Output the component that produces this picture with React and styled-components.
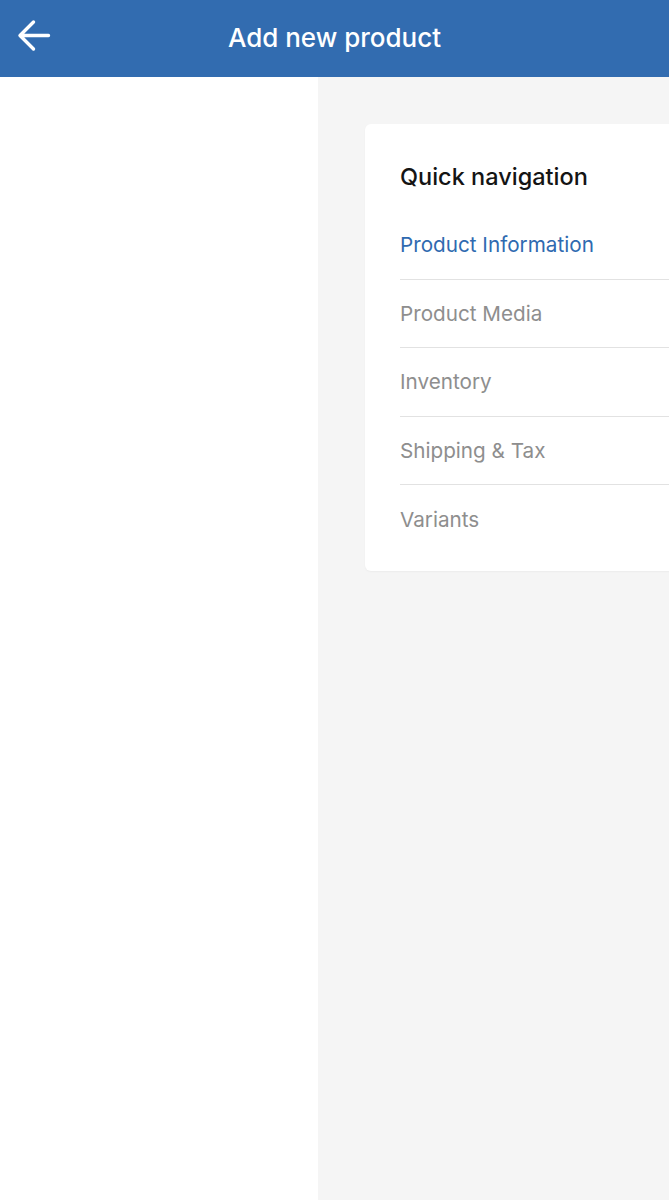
import styled, { createGlobalStyle } from "styled-components";

const GlobalStyle = createGlobalStyle`
  html, body {
    margin: 0;
    padding: 0;
    background: #ffffff;
    overflow-x: hidden;
  }
  * { box-sizing: border-box; }
`;

const Page = styled.div`
  width: 669px;
  height: 1200px;
  display: flex;
  flex-direction: column;
  overflow: hidden;
  font-family: Inter, "Noto Sans", sans-serif;
`;

const TopBar = styled.header`
  height: 77px;
  flex: none;
  background: #326cb0;
  display: flex;
  align-items: center;
  position: relative;
`;

const BackButton = styled.button`
  width: 70px;
  height: 77px;
  border: none;
  background: transparent;
  padding: 0 0 2px 16px;
  display: flex;
  align-items: center;
  cursor: pointer;
`;

const Title = styled.h1`
  position: absolute;
  left: 0;
  right: 0;
  top: 0;
  height: 74px;
  margin: 0;
  display: flex;
  align-items: center;
  justify-content: center;
  font-family: Inter, "Noto Sans", sans-serif;
  font-weight: 500;
  font-size: 26px;
  color: #ffffff;
  pointer-events: none;
`;

const Body = styled.div`
  flex: 1;
  display: flex;
  min-height: 0;
`;

const SideColumn = styled.aside`
  width: 318px;
  flex: none;
  background: #ffffff;
`;

const MainColumn = styled.main`
  flex: none;
  width: 480px;
  background: #f5f5f5;
  padding: 47px;
`;

const Card = styled.section`
  background: #ffffff;
  border-radius: 6px;
  padding: 36px 0 17px 35px;
  box-shadow: 0 1px 2px rgba(0, 0, 0, 0.04);
`;

const CardTitle = styled.h2`
  margin: 0;
  height: 33px;
  display: flex;
  align-items: center;
  font-size: 23.5px;
  font-weight: 450;
  color: #141414;
`;

const NavList = styled.ul`
  list-style: none;
  margin: 18px 0 0;
  padding: 0;
`;

const NavItem = styled.li`
  height: 68.5px;
  display: flex;
  align-items: center;
  font-size: 20.7px;
  color: ${(p) => (p.$active ? "#2f6ab0" : "#8e8e8e")};
  border-bottom: ${(p) => (p.$last ? "none" : "1.5px solid #e2e2e2")};
`;

const sections = [
  "Product Information",
  "Product Media",
  "Inventory",
  "Shipping & Tax",
  "Variants",
];

function ArrowBack() {
  return (
    <svg width="40" height="40" viewBox="0 0 40 40" fill="none">
      <path
        d="M4 17.5H32.5M17.5 4L4 17.5L17.5 31"
        stroke="#ffffff"
        strokeWidth="3.4"
        strokeLinecap="round"
        strokeLinejoin="round"
      />
    </svg>
  );
}

export default function App() {
  return (
    <>
      <GlobalStyle />
      <Page>
        <TopBar>
          <BackButton aria-label="Back">
            <ArrowBack />
          </BackButton>
          <Title>Add new product</Title>
        </TopBar>
        <Body>
          <SideColumn />
          <MainColumn>
            <Card>
              <CardTitle>Quick navigation</CardTitle>
              <NavList>
                {sections.map((s, i) => (
                  <NavItem key={s} $active={i === 0} $last={i === sections.length - 1}>
                    {s}
                  </NavItem>
                ))}
              </NavList>
            </Card>
          </MainColumn>
        </Body>
      </Page>
    </>
  );
}
